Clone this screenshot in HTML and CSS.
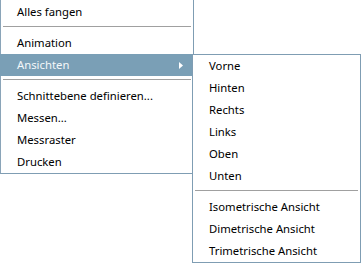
FILE: index.html
```html
<!DOCTYPE html>
<html>
<head>
<meta charset="utf-8">
<link rel="stylesheet" href="styles.css">
</head>
<body>
<div class="stage">
  <div class="menu main">
    <div class="item">Alles fangen</div>
    <div class="sep"></div>
    <div class="item">Animation</div>
    <div class="item active"><span>Ansichten</span><svg class="arrow" width="4" height="7" viewBox="0 0 4 7"><polygon points="0,0 4,3.5 0,7" fill="#ffffff"/></svg></div>
    <div class="sep"></div>
    <div class="item">Schnittebene definieren...</div>
    <div class="item">Messen...</div>
    <div class="item">Messraster</div>
    <div class="item">Drucken</div>
  </div>
  <div class="menu sub">
    <div class="item">Vorne</div>
    <div class="item">Hinten</div>
    <div class="item">Rechts</div>
    <div class="item">Links</div>
    <div class="item">Oben</div>
    <div class="item">Unten</div>
    <div class="sep"></div>
    <div class="item">Isometrische Ansicht</div>
    <div class="item">Dimetrische Ansicht</div>
    <div class="item">Trimetrische Ansicht</div>
  </div>
</div>
</body>
</html>
```
FILE: styles.css
```css
html, body {
  margin: 0;
  padding: 0;
  background: #ffffff;
}
.stage {
  position: relative;
  width: 361px;
  height: 263px;
  overflow: hidden;
  font-family: "Noto Sans", "Open Sans", sans-serif;
  font-size: 11.3px;
  color: #000000;
}
.menu {
  background: #ffffff;
  box-sizing: border-box;
  display: flex;
  flex-direction: column;
}
.main {
  width: 194px;
  padding-top: 1px;
  border-left: 1px solid #8aa4b8;
  border-right: 1px solid #7f9db3;
  border-bottom: 1px solid #7f9db3;
}
.sub {
  position: absolute;
  left: 192px;
  top: 54px;
  width: 169px;
  border: 1px solid #7f9db3;
}
.item {
  height: 22px;
  line-height: 22px;
  padding-left: 16px;
  display: flex;
  align-items: center;
  white-space: nowrap;
}
.item.active {
  background: #7a9fb6;
  color: #f4f7f9;
  margin-left: -1px;
  padding-left: 17px;
  justify-content: space-between;
  padding-right: 10px;
}
.arrow {
  display: block;
}
.sep {
  height: 1px;
  background: #a0a0a0;
  margin: 3px 2px 5px 2px;
}
```
